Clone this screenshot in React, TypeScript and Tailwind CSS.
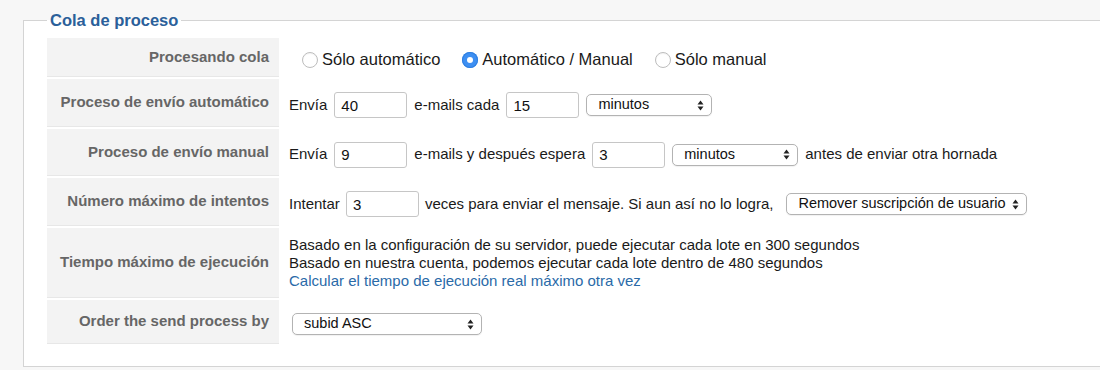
import React from "react";

function Arrows() {
  return (
    <svg width="7" height="11" viewBox="0 0 7 11" className="shrink-0">
      <path d="M3.5 0.5 L6.5 4.5 L0.5 4.5 Z" fill="#222" />
      <path d="M3.5 10.5 L6.5 6.5 L0.5 6.5 Z" fill="#222" />
    </svg>
  );
}

function Select({ value, className }: { value: string; className: string }) {
  return (
    <div
      className={`flex h-[22px] shrink-0 items-center justify-between whitespace-nowrap rounded-[5px] border border-[#b3b3b3] bg-white pl-[11px] pr-[7px] text-[14.5px] text-[#111] shadow-[0_1px_1px_rgba(0,0,0,0.06)] ${className}`}
    >
      <span>{value}</span>
      <Arrows />
    </div>
  );
}

function Field({ value }: { value: string }) {
  return (
    <input
      readOnly
      value={value}
      className="h-[26px] w-[73px] shrink-0 rounded-[3px] border border-[#c6c6c6] bg-white px-[6px] text-[15px] text-[#111] outline-none"
    />
  );
}

function Radio({ label, checked }: { label: string; checked?: boolean }) {
  return (
    <label className="flex items-center gap-[4px]">
      {checked ? (
        <span className="flex h-[16px] w-[16px] items-center justify-center rounded-full bg-[#3d8ff2] shadow-[inset_0_0_0_1px_#2f7fe0]">
          <span className="h-[6px] w-[6px] rounded-full bg-white" />
        </span>
      ) : (
        <span className="h-[16px] w-[16px] rounded-full border border-[#bdbdbd] bg-white shadow-[inset_0_1px_1px_rgba(0,0,0,0.05)]" />
      )}
      <span>{label}</span>
    </label>
  );
}

function Row({
  label,
  height,
  children,
  valueClass = "pt-[4px] pl-[8px]",
}: {
  label: string;
  height: string;
  children: React.ReactNode;
  valueClass?: string;
}) {
  return (
    <>
      <div
        className={`flex items-center justify-end border-b border-[#e7e7e7] bg-[#f3f3f3] pr-[10px] text-[15px] font-bold text-[#666] ${height}`}
      >
        {label}
      </div>
      <div className={`flex items-center whitespace-nowrap ${valueClass} ${height}`}>{children}</div>
    </>
  );
}

export default function App() {
  return (
    <div className="h-[370px] w-[1100px] overflow-hidden bg-[#f7f7f7] pl-[23px] pt-[11px] font-['Liberation_Sans',Arial,sans-serif] text-[15px] text-[#1a1a1a]">
      <fieldset className="w-[1110px] border border-[#d4d4d4] bg-white pb-[22px] pl-[23px]">
        <legend className="px-[3px] text-[16.5px] font-bold leading-[18px] text-[#2b609a]">
          Cola de proceso
        </legend>
        <div className="grid grid-cols-[232px_1fr] gap-x-[2px] gap-y-[2px] pt-[9px]">
          <Row label="Procesando cola" height="h-[39px]" valueClass="pt-[4px] pl-[21px] text-[16.5px]">
            <div className="flex items-center gap-[22px]">
              <Radio label="Sólo automático" />
              <Radio label="Automático / Manual" checked />
              <Radio label="Sólo manual" />
            </div>
          </Row>
          <Row label="Proceso de envío automático" height="h-[48px]">
            <div className="flex items-center gap-[7px]">
              <span>Envía</span>
              <Field value="40" />
              <span>e-mails cada</span>
              <Field value="15" />
              <Select value="minutos" className="w-[126px]" />
            </div>
          </Row>
          <Row label="Proceso de envío manual" height="h-[47px]">
            <div className="flex items-center gap-[7px]">
              <span>Envía</span>
              <Field value="9" />
              <span>e-mails y después espera</span>
              <Field value="3" />
              <Select value="minutos" className="w-[126px]" />
              <span>antes de enviar otra hornada</span>
            </div>
          </Row>
          <Row label="Número máximo de intentos" height="h-[48px]">
            <div className="flex items-center gap-[6px]">
              <span>Intentar</span>
              <Field value="3" />
              <span className="mr-[7px]">veces para enviar el mensaje. Si aun así no lo logra,</span>
              <Select value="Remover suscripción de usuario" className="w-[241px]" />
            </div>
          </Row>
          <Row label="Tiempo máximo de ejecución" height="h-[70px]" valueClass="pt-0 pl-[8px]">
            <div className="flex flex-col leading-[18px]">
              <span>Basado en la configuración de su servidor, puede ejecutar cada lote en 300 segundos</span>
              <span>Basado en nuestra cuenta, podemos ejecutar cada lote dentro de 480 segundos</span>
              <a className="text-[#2a6aa8]">Calcular el tiempo de ejecución real máximo otra vez</a>
            </div>
          </Row>
          <Row label="Order the send process by" height="h-[44px]" valueClass="pt-[4px] pl-[11px]">
            <Select value="subid ASC" className="w-[190px]" />
          </Row>
        </div>
      </fieldset>
    </div>
  );
}
